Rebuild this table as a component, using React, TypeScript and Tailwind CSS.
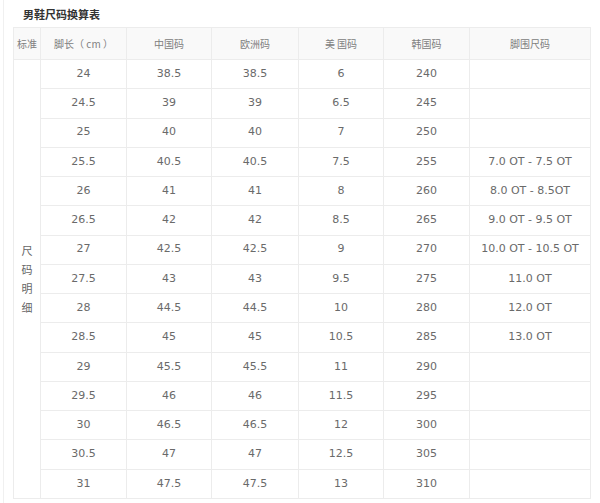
const rows: string[][] = [
  ['24', '38.5', '38.5', '6', '240', ''],
  ['24.5', '39', '39', '6.5', '245', ''],
  ['25', '40', '40', '7', '250', ''],
  ['25.5', '40.5', '40.5', '7.5', '255', '7.0 OT - 7.5 OT'],
  ['26', '41', '41', '8', '260', '8.0 OT - 8.5OT'],
  ['26.5', '42', '42', '8.5', '265', '9.0 OT - 9.5 OT'],
  ['27', '42.5', '42.5', '9', '270', '10.0 OT - 10.5 OT'],
  ['27.5', '43', '43', '9.5', '275', '11.0 OT'],
  ['28', '44.5', '44.5', '10', '280', '12.0 OT'],
  ['28.5', '45', '45', '10.5', '285', '13.0 OT'],
  ['29', '45.5', '45.5', '11', '290', ''],
  ['29.5', '46', '46', '11.5', '295', ''],
  ['30', '46.5', '46.5', '12', '300', ''],
  ['30.5', '47', '47', '12.5', '305', ''],
  ['31', '47.5', '47.5', '13', '310', ''],
];

const headers = ['脚长（ cm ）', '中国码', '欧洲码', '美 国码', '韩国码', '脚围尺码'];
const widths = ['w-[86px]', 'w-[85px]', 'w-[87px]', 'w-[85px]', 'w-[86px]', 'w-[121px]'];

export default function App() {
  return (
    <div className="w-[600px] h-[503px] bg-white overflow-hidden font-['DejaVu_Sans','Noto_Sans_CJK_SC',sans-serif]">
      <div className="ml-[3px] h-full border-l border-[#f0f0f0] pl-[9px]">
        {/* Title */}
        <div className="h-[27px] pl-[10px] pt-[7px] text-[11px] font-bold leading-[14px] text-[#333] font-['Noto_Sans_CJK_SC',sans-serif]">
          男鞋尺码换算表
        </div>

        <table className="w-[577px] table-fixed border-collapse text-[11px] text-[#6a6a6a]">
          <colgroup>
            <col className="w-[27px]" />
            {widths.map((w, i) => (
              <col key={i} className={w} />
            ))}
          </colgroup>
          <thead>
            <tr className="h-[32px] bg-[#f9f9f9]">
              <th className="border border-[#ececec] p-0 text-center font-normal text-[10px] text-[#808080] font-['Noto_Sans_CJK_SC',sans-serif]">
                标准
              </th>
              {headers.map((h) => (
                <th
                  key={h}
                  className="border border-[#ececec] p-0 text-center font-normal text-[10px] text-[#808080] font-['Noto_Sans_CJK_SC',sans-serif]"
                >
                  {h}
                </th>
              ))}
            </tr>
          </thead>
          <tbody>
            {rows.map((r, i) => (
              <tr key={i} className="h-[29.27px]">
                {i === 0 && (
                  <td
                    rowSpan={15}
                    className="border border-[#ececec] p-0 text-center align-middle text-[11px] leading-[19px] text-[#666] font-['Noto_Sans_CJK_SC',sans-serif]"
                  >
                    <div className="flex flex-col items-center">
                      <span>尺</span>
                      <span>码</span>
                      <span>明</span>
                      <span>细</span>
                    </div>
                  </td>
                )}
                {r.map((c, j) => (
                  <td key={j} className="border border-[#ececec] p-0 text-center align-middle">
                    {c}
                  </td>
                ))}
              </tr>
            ))}
          </tbody>
        </table>
      </div>
    </div>
  );
}
